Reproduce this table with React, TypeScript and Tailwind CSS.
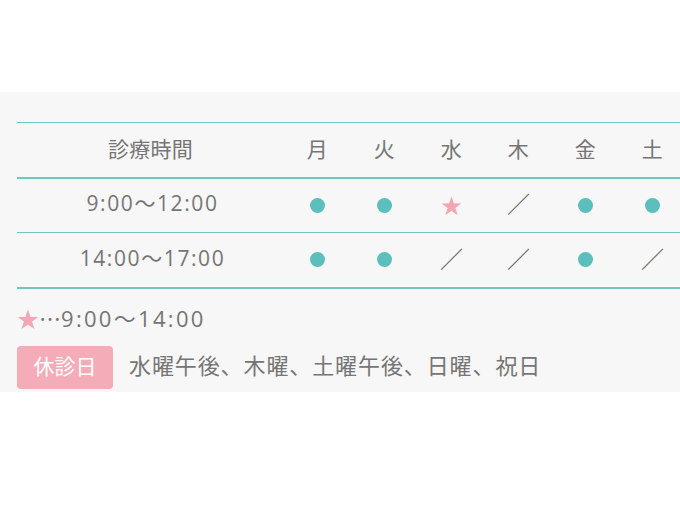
import * as React from "react";

type Mark = "o" | "x" | "s";

const days = ["月", "火", "水", "木", "金", "土"];

const rows: { time: string; marks: Mark[] }[] = [
  { time: "9:00〜12:00", marks: ["o", "o", "s", "x", "o", "o"] },
  { time: "14:00〜17:00", marks: ["o", "o", "x", "x", "o", "x"] },
];

const jp = '"Noto Sans CJK JP", "Noto Sans", sans-serif';
const num = '"Open Sans", "Noto Sans CJK JP", sans-serif';

function Cell({ mark }: { mark: Mark }) {
  if (mark === "o") {
    return <span className="block mx-auto w-[15px] h-[15px] rounded-full bg-[#5dbfbc]" />;
  }
  if (mark === "s") {
    return <span className="block text-[#f3a6b3] text-[21px] leading-[21px] -mt-[2px]">★</span>;
  }
  return <span className="block text-[#666] text-[23px] leading-[23px] -mt-[3px]">／</span>;
}

export default function App() {
  return (
    <div className="w-[680px] h-[510px] bg-white overflow-hidden" style={{ fontFamily: jp }}>
      <div className="h-[92px]" />
      <div className="h-[300px] bg-[#f7f7f7] pl-[17px] pt-[30px] text-[#757575] overflow-hidden">
        <table className="w-[669px] border-collapse table-fixed">
          <colgroup>
            <col className="w-[267px]" />
            {days.map((d) => (
              <col key={d} className="w-[67px]" />
            ))}
          </colgroup>
          <thead>
            <tr className="h-[55px] border-t border-b-2 border-[#74c6c3] text-[21px] tracking-[0.3px]">
              <th className="font-normal text-center pb-[3px]">診療時間</th>
              {days.map((d) => (
                <th key={d} className="font-normal text-center pb-[3px]">{d}</th>
              ))}
            </tr>
          </thead>
          <tbody>
            {rows.map((r, i) => (
              <tr
                key={r.time}
                className={`h-[55px] border-[#74c6c3] ${i === rows.length - 1 ? "border-b-2" : "border-b"}`}
              >
                <td className="text-center text-[21px] tracking-[1.6px] pb-[3px] pl-[4px]" style={{ fontFamily: num }}>
                  {r.time}
                </td>
                {r.marks.map((m, j) => (
                  <td key={j} className="text-center">
                    <Cell mark={m} />
                  </td>
                ))}
              </tr>
            ))}
          </tbody>
        </table>

        <p className="mt-[16px] text-[22px] leading-[24px] tracking-[2.3px]" style={{ fontFamily: num }}>
          <span className="text-[#f3a6b3] tracking-normal" style={{ fontFamily: jp }}>★</span>
          <span className="tracking-normal" style={{ fontFamily: jp }}>…</span>9:00〜14:00
        </p>
        <div className="mt-[16px] flex items-center gap-[16px]">
          <span className="w-[96px] h-[43px] rounded-[4px] bg-[#f4adb8] text-white text-[21px] flex items-center justify-center pb-[2px]">
            休診日
          </span>
          <span className="text-[22px] tracking-[0.9px] pb-[5px]">水曜午後、木曜、土曜午後、日曜、祝日</span>
        </div>
      </div>
    </div>
  );
}
